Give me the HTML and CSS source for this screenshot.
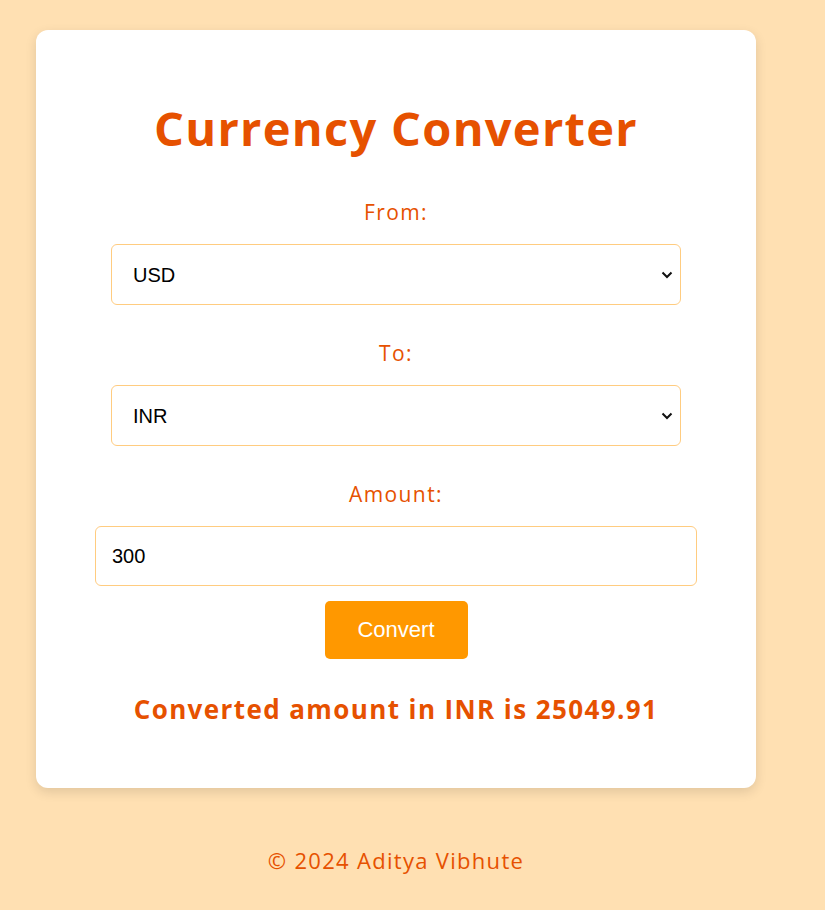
FILE: index.html
```html
<!DOCTYPE html>
<html>
<head>
<meta charset="utf-8">
<link rel="stylesheet" href="styles.css">
</head>
<body>
<div class="page">
  <main class="card">
    <h1 class="title">Currency Converter</h1>
    <label class="label" for="from">From:</label>
    <div class="select-wrap">
      <select id="from" class="select"><option>USD</option></select>
      <svg class="chev" width="12" height="8" viewBox="0 0 12 8"><path d="M1.5 1.5 L6 6 L10.5 1.5" fill="none" stroke="#111" stroke-width="2"/></svg>
    </div>
    <label class="label" for="to">To:</label>
    <div class="select-wrap">
      <select id="to" class="select"><option>INR</option></select>
      <svg class="chev" width="12" height="8" viewBox="0 0 12 8"><path d="M1.5 1.5 L6 6 L10.5 1.5" fill="none" stroke="#111" stroke-width="2"/></svg>
    </div>
    <label class="label" for="amount">Amount:</label>
    <input id="amount" class="input" type="text" value="300">
    <button class="btn">Convert</button>
    <p class="result">Converted amount in INR is 25049.91</p>
  </main>
  <footer class="footer">© 2024 Aditya Vibhute</footer>
</div>
</body>
</html>
```

FILE: styles.css
```css
html, body {
  margin: 0;
  padding: 0;
  background: #ffe0b2;
}
.page {
  width: 720px;
  padding: 30px 36px 0;
  font-family: "Open Sans", sans-serif;
  color: #e65100;
}
.card {
  background: #fff;
  border-radius: 12px;
  box-shadow: 0 4px 12px rgba(0, 0, 0, 0.12);
  height: 758px;
  box-sizing: border-box;
  padding-top: 66px;
  display: flex;
  flex-direction: column;
  align-items: center;
}
.title {
  margin: 0;
  font-size: 47px;
  font-weight: 700;
  line-height: 64px;
  letter-spacing: 1.3px;
}
.label {
  margin-top: 34px;
  font-size: 21px;
  line-height: 28px;
  font-weight: 500;
  letter-spacing: 1.4px;
}
.label:first-of-type {
  margin-top: 38px;
}
.select-wrap {
  position: relative;
  margin-top: 18px;
  width: 570px;
  height: 61px;
}
.select {
  appearance: none;
  -webkit-appearance: none;
  width: 100%;
  height: 100%;
  box-sizing: border-box;
  border: 1px solid #ffcc80;
  border-radius: 6px;
  background: #fff;
  padding: 0 21px;
  font-family: "Liberation Sans", Arial, sans-serif;
  font-size: 20px;
  color: #000;
}
.chev {
  position: absolute;
  right: 8px;
  top: 27px;
}
.input {
  margin-top: 18px;
  width: 602px;
  height: 60px;
  box-sizing: border-box;
  border: 1px solid #ffcc80;
  border-radius: 6px;
  padding: 0 16px;
  font-family: "Liberation Sans", Arial, sans-serif;
  font-size: 20px;
  color: #000;
  outline: none;
}
.btn {
  margin-top: 15px;
  width: 143px;
  height: 58px;
  border: none;
  border-radius: 5px;
  background: #ff9800;
  color: #fff;
  font-family: "Liberation Sans", Arial, sans-serif;
  font-size: 22px;
}
.result {
  margin: 32px 0 0;
  font-size: 26px;
  font-weight: 700;
  line-height: 36px;
  letter-spacing: 1.4px;
}
.footer {
  margin-top: 57px;
  text-align: center;
  font-size: 22px;
  line-height: 30px;
  letter-spacing: 1.3px;
}
```
